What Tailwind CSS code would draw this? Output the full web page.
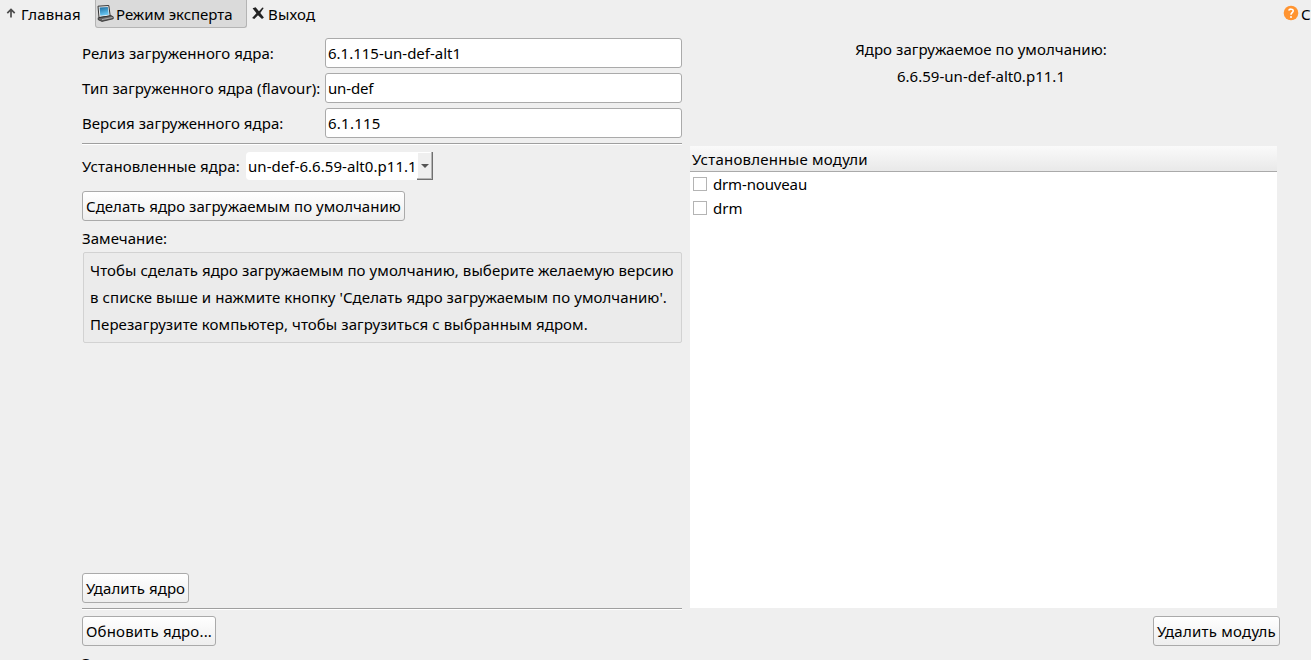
<!DOCTYPE html>
<html lang="ru">
<head>
<meta charset="utf-8">
<title>Ядро системы</title>
<script src="https://cdn.jsdelivr.net/npm/@tailwindcss/browser@4"></script>
</head>
<body class="bg-[#efefef] text-black font-['Noto_Sans','Open_Sans',sans-serif] text-[15px] leading-5 whitespace-nowrap h-[660px] w-[1311px] overflow-hidden flex flex-col">
<header class="flex items-start h-[38px] shrink-0 w-full overflow-hidden">
  <a class="flex items-center h-7 ml-[5px] w-[90px]">
    <svg class="w-3 h-3 mr-1 -mt-0.5" viewBox="0 0 12 12" fill="none" stroke="#4c4c4c" stroke-width="1.7"><path d="M6 10.5V2.5M2.3 6.2L6 2.5l3.7 3.7"/></svg>
    <span class="tracking-[0.1px]">Главная</span>
  </a>
  <a class="flex items-center h-7 w-[152px] border border-t-0 border-[#b4b4b4] rounded-b-[3px] bg-[#dadada] pl-0.5">
    <svg class="w-[17px] h-[17px] mr-px -mt-px -ml-px" viewBox="0 0 17 17">
      <defs><linearGradient id="scr" x1="0" y1="0" x2="0.3" y2="1"><stop offset="0" stop-color="#176a9f"/><stop offset="1" stop-color="#6cc8f2"/></linearGradient></defs>
      <path d="M1 1.2L11.8.5 13.2 11 2 12.5z" fill="#eee" stroke="#333" stroke-width="1"/>
      <path d="M2.6 2.4L10.8 2l1 7.8-8.5 1z" fill="url(#scr)"/>
      <path d="M1.2 12.8L14 10.6l2.2 1.2v2L5 16.4l-3.8-1.7z" fill="#666" stroke="#292929" stroke-width=".8"/>
      <path d="M5 14.6l10.6-2.2" stroke="#bbb" stroke-width=".8"/>
    </svg>
    <span class="ml-px tracking-[-0.05px]">Режим эксперта</span>
  </a>
  <a class="flex items-center h-7 ml-[5px]">
    <svg class="w-3 h-3 mr-1 -mt-0.5" viewBox="0 0 12 12" fill="#222"><path d="M.6 1.2L3.6.2 7 4.2 10.4.4 11.7.9 8.3 6l3.6 4.4-1.9 1.6L6 8.2 2.3 11.9.1 11.1 4.4 6.2z"/></svg>
    <span class="tracking-[0.2px]">Выход</span>
  </a>
  <a class="flex items-center h-7 ml-auto w-[28px] overflow-hidden">
    <svg class="w-4 h-4 mr-[2px] -mt-0.5 shrink-0" viewBox="0 0 16 16"><circle cx="8" cy="8" r="7.3" fill="#ff9431"/><path d="M5.7 5.5C6.4 3.6 10.3 3.7 10.2 6 10.1 7.6 8 7.7 8 9.7" fill="none" stroke="#fff" stroke-width="1.6"/><circle cx="8" cy="12" r="1" fill="#fff"/></svg>
    <span>Справка</span>
  </a>
</header>
<main class="flex gap-2 pl-[82px] h-[622px] shrink-0">
  <section class="w-[600px] flex flex-col items-start shrink-0">
    <div class="grid grid-cols-[243px_357px] gap-y-[5px] items-center shrink-0">
      <label class="tracking-[0.07px]">Релиз загруженного ядра:</label>
      <div class="h-[30px] border border-[#aaa] rounded-[3px] bg-white pl-[2px] flex items-center">6.1.115-un-def-alt1</div>
      <label class="tracking-[0.06px]">Тип загруженного ядра (flavour):</label>
      <div class="h-[30px] border border-[#aaa] rounded-[3px] bg-white pl-[2px] flex items-center tracking-[-0.15px]">un-def</div>
      <label class="tracking-[0.05px]">Версия загруженного ядра:</label>
      <div class="h-[30px] border border-[#aaa] rounded-[3px] bg-white pl-[2px] flex items-center tracking-[0.25px]">6.1.115</div>
    </div>
    <div class="mt-[5px] w-full h-0.5 bg-white border-t border-[#9f9f9f] shrink-0"></div>
    <div class="mt-[7px] flex items-center h-[28px] shrink-0">
      <label class="w-[164px] tracking-[0.1px]">Установленные ядра:</label>
      <div class="flex w-[187px] h-[28px] bg-white rounded-l-[4px] pl-0.5 items-center">
        <span class="grow tracking-[0.05px]">un-def-6.6.59-alt0.p11.1</span>
        <span class="w-4 h-[28px] bg-[#efefef] border-r border-b border-[#707070] shadow-[inset_-1px_-1px_0_#b5b5b5,inset_1px_1px_0_#fff] flex items-center justify-center shrink-0"><svg class="w-2 h-1 mt-px" viewBox="0 0 8 4"><path d="M0 0h8L4 4z" fill="#555"/></svg></span>
      </div>
    </div>
    <button class="mt-[11px] h-[30px] w-[323px] border border-[#aaa] rounded-[3px] bg-linear-to-b from-white to-[#eeeeee] flex items-center pl-[3px] tracking-[0.03px] shrink-0">Сделать ядро загружаемым по умолчанию</button>
    <div class="mt-[7px] h-5 tracking-[0.05px] shrink-0">Замечание:</div>
    <div class="mt-[4px] ml-px w-[599px] h-[91px] border border-[#d2d2d2] rounded-[2px] bg-[#ebebeb] pl-[6px] pt-[4px] leading-[27px] tracking-[0.075px] shrink-0">Чтобы сделать ядро загружаемым по умолчанию, выберите желаемую версию<br>в списке выше и нажмите кнопку 'Сделать ядро загружаемым по умолчанию'.<br>Перезагрузите компьютер, чтобы загрузиться с выбранным ядром.</div>
    <button class="mt-[230px] h-[30px] w-[107px] border border-[#aaa] rounded-[3px] bg-linear-to-b from-white to-[#eeeeee] flex items-center pl-[3px] shrink-0 tracking-[0.08px]">Удалить ядро</button>
    <div class="mt-[5px] w-full h-0.5 bg-white border-t border-[#9f9f9f] shrink-0"></div>
    <button class="mt-[6px] h-[30px] w-[134px] border border-[#aaa] rounded-[3px] bg-linear-to-b from-white to-[#eeeeee] flex items-center pl-[3px] shrink-0 tracking-[0.18px]">Обновить ядро...</button>
    <div class="mt-[7px] h-5 shrink-0">Замечание:</div>
  </section>
  <section class="w-[590px] flex flex-col shrink-0">
    <div class="h-[108px] w-[582px] text-center leading-[27px] shrink-0 tracking-[0.06px]"><p class="-mt-0.5">Ядро загружаемое по умолчанию:</p><p class="tracking-[0.02px]">6.6.59-un-def-alt0.p11.1</p></div>
    <div class="w-[587px] h-[462px] bg-white shrink-0">
      <div class="h-[26px] border-b border-[#aaa] bg-linear-to-b from-[#fafafa] to-[#e9e9e9] pl-0.5 pt-[3px] tracking-[0.24px]">Установленные модули</div>
      <div class="flex items-center h-6 pl-[3px]"><span class="w-3.5 h-3.5 border border-[#b4b4b4] mr-[6px] shrink-0"></span><span class="tracking-[-0.15px]">drm-nouveau</span></div>
      <div class="flex items-center h-6 pl-[3px]"><span class="w-3.5 h-3.5 border border-[#b4b4b4] mr-[6px] shrink-0"></span><span>drm</span></div>
    </div>
    <button class="mt-2 h-[30px] w-[127px] self-end border border-[#aaa] rounded-[3px] bg-linear-to-b from-white to-[#eeeeee] flex items-center pl-[3px] shrink-0 tracking-[0.24px]">Удалить модуль</button>
  </section>
</main>
</body>
</html>
